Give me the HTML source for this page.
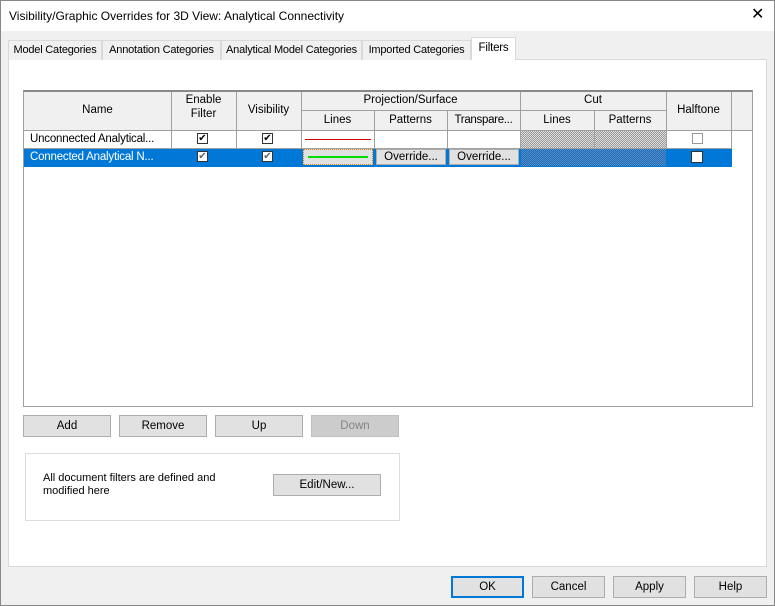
<!DOCTYPE html>
<html><head><style>
*{box-sizing:border-box;margin:0;padding:0}
body{width:775px;height:606px;background:#f0f0f0;font-family:"Liberation Sans",sans-serif;font-size:11.5px;color:#000;position:relative;overflow:hidden;white-space:nowrap}
.a{position:absolute}
.btn{position:absolute;background:#e1e1e1;border:1px solid #adadad;text-align:center;line-height:20px;font-size:11.5px}
.tab{position:absolute;top:40px;height:20px;border:1px solid #d9d9d9;border-bottom:none;background:#f0f0f0;line-height:18px;text-align:center;font-size:11px;letter-spacing:-0.2px;overflow:hidden}
.t{position:absolute;text-align:center;font-size:11.5px}
.v{position:absolute;width:1px;background:#a0a0a0}
.hl{position:absolute;height:1px;background:#a0a0a0}
.cb{width:11px;height:11px;border:1px solid #333;background:#fff;font-size:10px;line-height:9px;text-align:center}
.hatch{position:absolute;background-image:repeating-conic-gradient(#999 0 25%,#ddd 0 50%);background-size:2px 2px}
</style></head><body>
<div class="a" style="left:0;top:0;width:775px;height:606px;border:1px solid #888"></div>
<div class="a" style="left:1px;top:1px;width:773px;height:30px;background:#fff"></div>
<div class="a" style="left:9px;top:9px;font-size:12px">Visibility/Graphic Overrides for 3D View: Analytical Connectivity</div>
<div class="a" style="left:751px;top:4px;font-size:16px">✕</div>
<div class="a" style="left:8px;top:59px;width:759px;height:508px;background:#fff;border:1px solid #d9d9d9"></div>
<div class="tab" style="left:8px;width:94px">Model Categories</div>
<div class="tab" style="left:102px;width:119px">Annotation Categories</div>
<div class="tab" style="left:221px;width:141px">Analytical Model Categories</div>
<div class="tab" style="left:362px;width:109px">Imported Categories</div>
<div class="tab" style="left:471px;top:37px;height:23px;width:45px;background:#fff;line-height:20px;font-size:11.5px">Filters</div>

<div class="a" style="left:23px;top:90px;width:730px;height:317px;background:#fff;border:1px solid #a0a0a0;border-top:2px solid #888"></div>
<div class="a" style="left:24px;top:92px;width:728px;height:38px;background:#f0f0f0"></div>
<!-- header lines -->
<div class="hl" style="left:24px;top:130px;width:708px"></div>
<div class="hl" style="left:731px;top:130px;width:21px"></div>
<div class="hl" style="left:301px;top:110px;width:366px"></div>
<div class="hl" style="left:24px;top:148px;width:708px"></div>
<div class="hl" style="left:24px;top:166px;width:708px;background:#0078d7"></div>
<div class="v" style="left:171px;top:92px;height:74px"></div>
<div class="v" style="left:236px;top:92px;height:74px"></div>
<div class="v" style="left:301px;top:92px;height:74px"></div>
<div class="v" style="left:374px;top:110px;height:56px"></div>
<div class="v" style="left:447px;top:110px;height:56px"></div>
<div class="v" style="left:520px;top:92px;height:74px"></div>
<div class="v" style="left:594px;top:110px;height:56px"></div>
<div class="v" style="left:666px;top:92px;height:74px"></div>
<div class="v" style="left:731px;top:92px;height:74px"></div>

<div class="t" style="left:24px;top:104px;width:147px">Name</div>
<div class="t" style="left:171px;top:93px;width:65px;line-height:14px">Enable<br>Filter</div>
<div class="t" style="left:236px;top:104px;width:65px">Visibility</div>
<div class="t" style="left:301px;top:94px;width:219px">Projection/Surface</div>
<div class="t" style="left:301px;top:114px;width:73px">Lines</div>
<div class="t" style="left:374px;top:114px;width:73px">Patterns</div>
<div class="t" style="left:447px;top:114px;width:73px;letter-spacing:-0.3px">Transpare...</div>
<div class="t" style="left:520px;top:94px;width:146px">Cut</div>
<div class="t" style="left:520px;top:114px;width:74px">Lines</div>
<div class="t" style="left:594px;top:114px;width:72px">Patterns</div>
<div class="t" style="left:666px;top:104px;width:65px">Halftone</div>

<!-- row1 -->
<div class="a" style="left:30px;top:133px;letter-spacing:-0.2px">Unconnected Analytical...</div>
<div class="a" style="left:197px;top:133px"><div class="cb">✔</div></div>
<div class="a" style="left:262px;top:133px"><div class="cb">✔</div></div>
<div class="a" style="left:305px;top:139px;width:66px;height:1px;background:#d00000"></div>
<div class="hatch" style="left:521px;top:131px;width:145px;height:17px"></div>
<div class="v" style="left:594px;top:131px;height:17px"></div>
<div class="a" style="left:692px;top:133px"><div class="cb" style="border-color:#999"></div></div>
<!-- row2 -->
<div class="a" style="left:24px;top:149px;width:708px;height:17px;background:#0078d7"></div>
<div class="a" style="left:30px;top:151px;color:#fff;letter-spacing:-0.2px">Connected Analytical N...</div>
<div class="a" style="left:197px;top:151px"><div class="cb" style="color:#666">✔</div></div>
<div class="a" style="left:262px;top:151px"><div class="cb" style="color:#666">✔</div></div>
<div class="a" style="left:303px;top:149px;width:70px;height:16px;background:#e1e1e1;border:1px dotted #e08000"><div style="margin:6px 0 0 4px;width:60px;height:2px;background:#00dd00"></div></div>
<div class="btn" style="left:376px;top:149px;width:70px;height:16px;line-height:14px">Override...</div>
<div class="btn" style="left:449px;top:149px;width:70px;height:16px;line-height:14px">Override...</div>
<div class="a" style="left:521px;top:149px;width:145px;height:17px;background-image:repeating-conic-gradient(#2a6fb0 0 25%,#4a8ad0 0 50%);background-size:2px 2px"></div>
<div class="a" style="left:691px;top:151px"><div class="cb" style="width:12px;height:12px"></div></div>

<div class="btn" style="left:23px;top:415px;width:88px;height:22px">Add</div>
<div class="btn" style="left:119px;top:415px;width:88px;height:22px">Remove</div>
<div class="btn" style="left:215px;top:415px;width:88px;height:22px">Up</div>
<div class="btn" style="left:311px;top:415px;width:88px;height:22px;background:#cccccc;border-color:#bfbfbf;color:#838383">Down</div>
<div class="a" style="left:25px;top:453px;width:375px;height:68px;border:1px solid #dcdcdc"></div>
<div class="a" style="left:43px;top:472px;line-height:13px;font-size:11px">All document filters are defined and<br>modified here</div>
<div class="btn" style="left:273px;top:474px;width:108px;height:22px">Edit/New...</div>
<div class="btn" style="left:451px;top:576px;width:73px;height:22px;border:2px solid #0078d7;line-height:18px">OK</div>
<div class="btn" style="left:532px;top:576px;width:73px;height:22px">Cancel</div>
<div class="btn" style="left:613px;top:576px;width:73px;height:22px">Apply</div>
<div class="btn" style="left:694px;top:576px;width:73px;height:22px">Help</div>
</body></html>
